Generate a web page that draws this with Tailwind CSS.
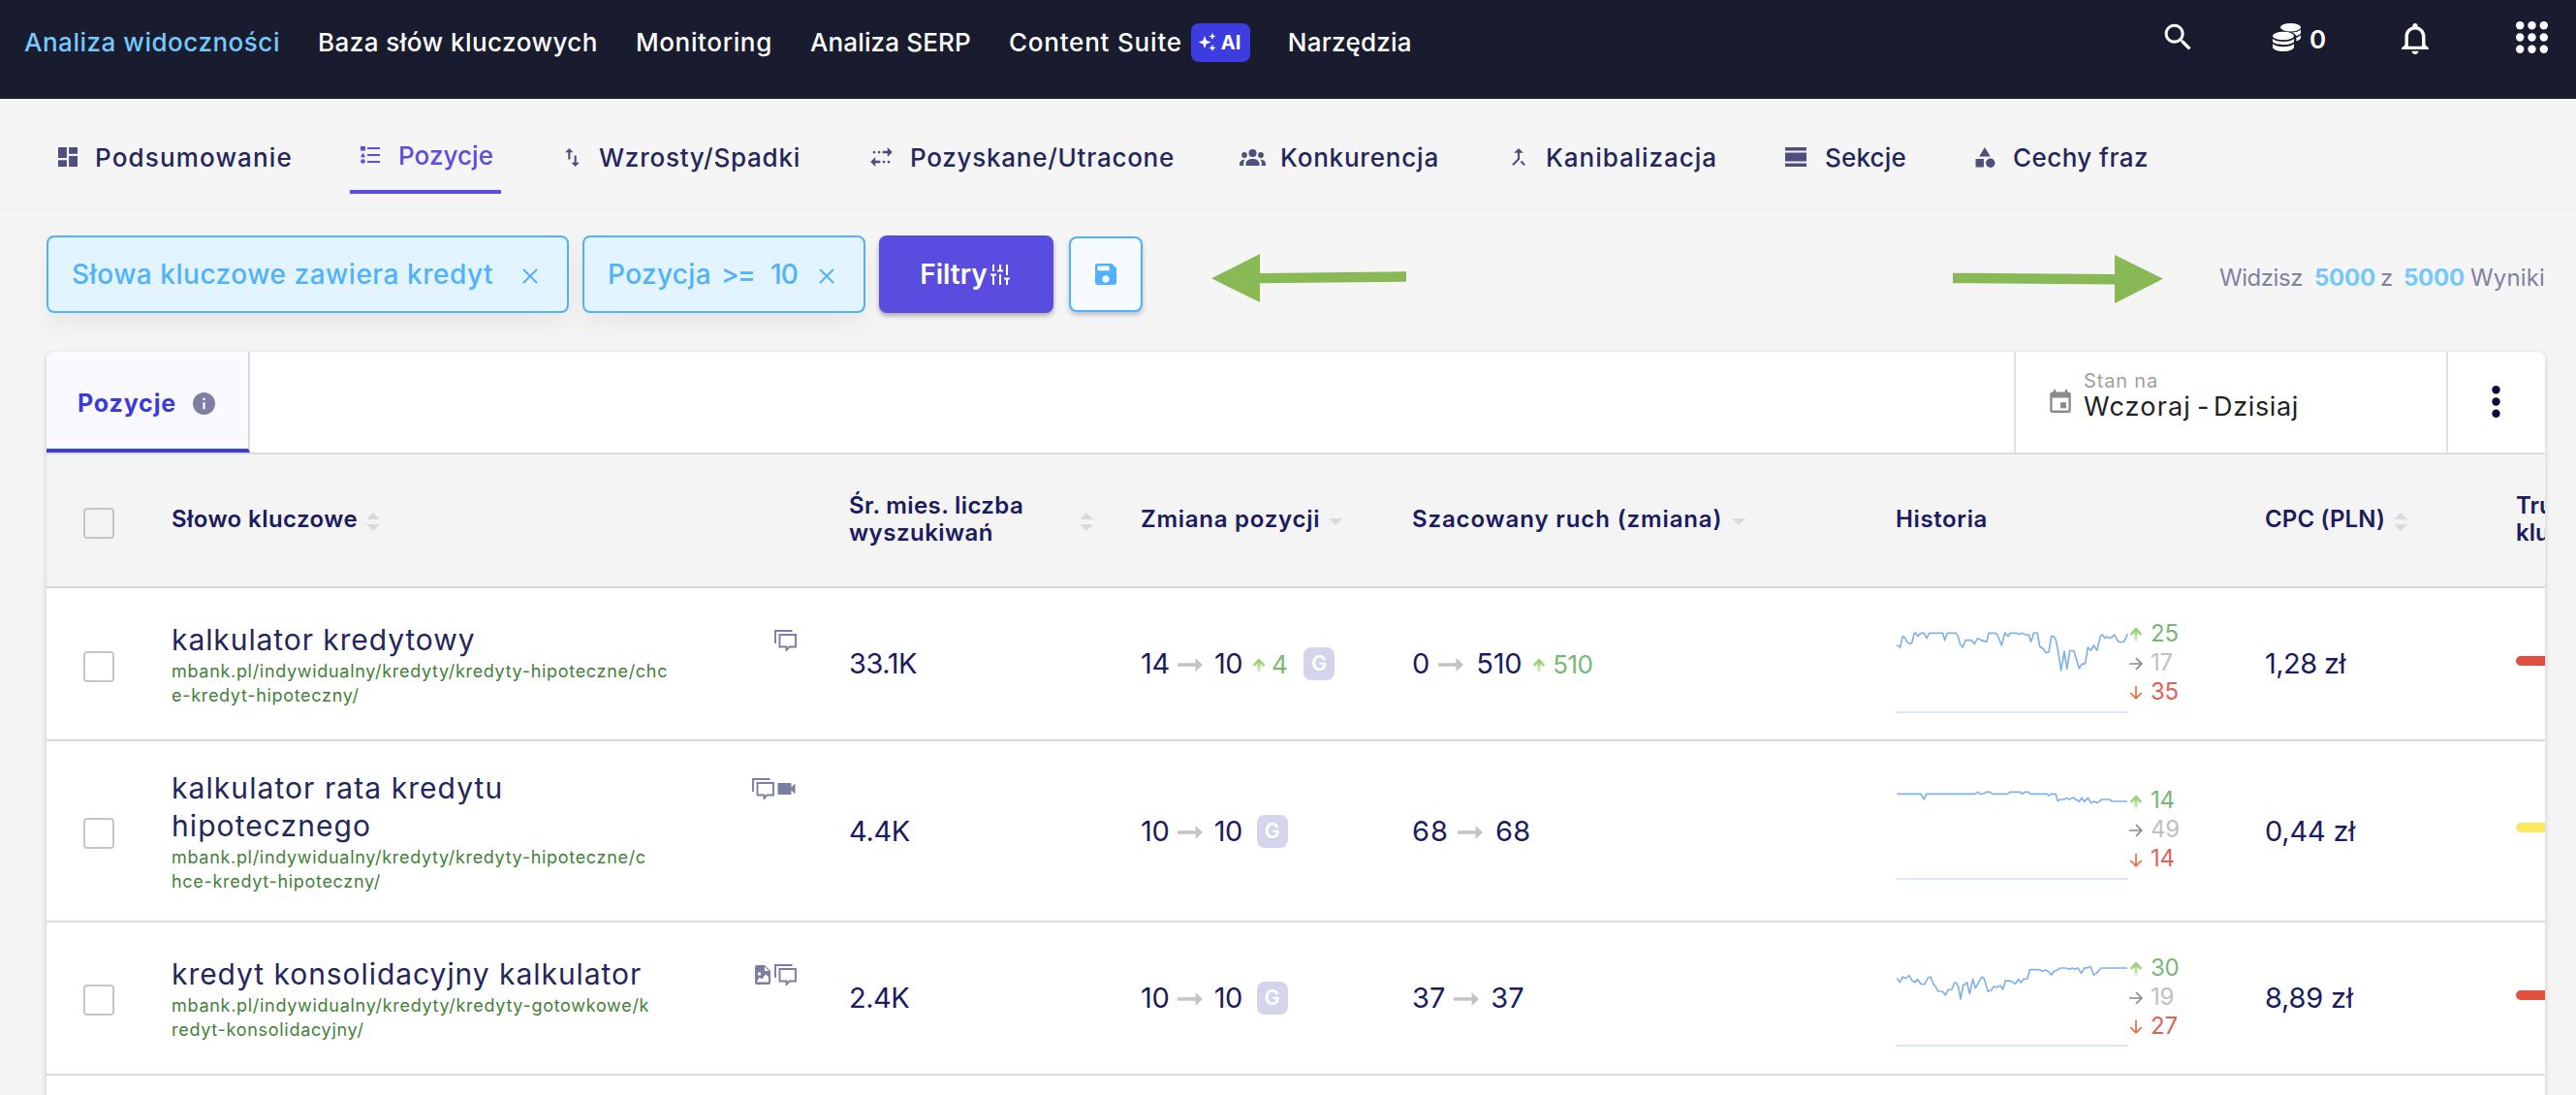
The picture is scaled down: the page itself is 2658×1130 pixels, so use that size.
<!DOCTYPE html>
<html lang="pl">
<head>
    <meta charset="UTF-8">
    <meta name="viewport" content="width=device-width, initial-scale=1.0">
    <title>Analiza widoczności - Pozycje</title>
    <script src="https://cdn.jsdelivr.net/npm/@tailwindcss/browser@4"></script>
</head>
<body class="h-[1130px] overflow-hidden bg-[#f5f5f5] font-[Inter,sans-serif] text-[#24265c] whitespace-nowrap">
    <!-- Icons -->
    <svg class="absolute size-0">
        <linearGradient id="fade" gradientUnits="userSpaceOnUse" x1="0" y1="2" x2="0" y2="15">
            <stop offset="0" stop-color="#8fd068"/>
            <stop offset="0.5" stop-color="#b0de95"/>
            <stop offset="1" stop-color="#e2f4d8"/>
        </linearGradient>
        <symbol id="i-sort" viewBox="0 0 14 19"><path d="M7 0l7 7H0zM0 12h14l-7 7z"/></symbol>
        <symbol id="i-desc" viewBox="0 0 14 7"><path d="M0 0h14L7 7z"/></symbol>
        <symbol id="i-long" viewBox="0 0 26 14"><path d="M0 5.2h18.500V0L26 7l-7.500 7V8.800H0z"/></symbol>
        <symbol id="i-up" viewBox="0 0 14 15"><path d="M7 2.500V15M1.500 8L7 2.500 12.500 8" fill="none" stroke="url(#fade)" stroke-width="3"/></symbol>
        <symbol id="i-same" viewBox="0 0 14 14"><path d="M0 7h12.500M7 1.200L12.800 7 7 12.800" fill="none" stroke="#8a8a8a" stroke-width="1.700"/></symbol>
        <symbol id="i-down" viewBox="0 0 14 14"><path d="M7 0v12.500M1.200 7L7 12.800 12.800 7" fill="none" stroke="#ee6a3c" stroke-width="1.700"/></symbol>
        <symbol id="i-close" viewBox="0 0 16 16"><path d="M1 1l14 14M15 1L1 15" fill="none" stroke="currentColor" stroke-width="2"/></symbol>
        <symbol id="i-chat" viewBox="0 0 23 22"><path d="M1 14V1h17.500M5.500 5H22v12.500h-6.500L12.500 21v-3.500h-7z" fill="none" stroke="currentColor" stroke-width="1.900"/></symbol>
        <symbol id="i-video" viewBox="3 6 18 12"><path d="M17 10.500V7c0-.55-.45-1-1-1H4c-.55 0-1 .45-1 1v10c0 .55.45 1 1 1h12c.55 0 1-.45 1-1v-3.500l4 4v-11l-4 4z"/></symbol>
        <symbol id="i-image" viewBox="0 0 16 20"><path fill-rule="evenodd" d="M2 0h8l6 6v12a2 2 0 0 1-2 2H2a2 2 0 0 1-2-2V2a2 2 0 0 1 2-2zM10 1.500V6h4.500zM2 17.500h12V12l-3-2.500-4 5-2.500-2zM4.500 7.200a1.800 1.800 0 1 0 0 3.600 1.800 1.800 0 0 0 0-3.600z"/></symbol>
    </svg>

    <!-- Top bar -->
    <header class="flex h-[102px] bg-[#191b2e] pl-[25px] pr-[29px] text-white">
        <nav class="flex h-[87px] items-center gap-[39px] text-[26px] font-medium">
            <a class="tracking-[0.52px] text-[#75c8fa]">Analiza widoczności</a>
            <a class="tracking-[0.46px]">Baza słów kluczowych</a>
            <a class="tracking-[0.64px]">Monitoring</a>
            <a class="tracking-[0.15px]">Analiza SERP</a>
            <a class="flex items-center tracking-[0.8px]">Content Suite
                <span class="ml-[9px] flex h-10 w-[61px] items-center gap-[5px] rounded-lg bg-[#3c3ce0] pl-[7px] text-[20px] font-bold tracking-normal">
                    <svg class="size-[19px]" viewBox="0 0 19 19" fill="currentColor"><path d="M7 3l1.800 4.700L13.500 9.500l-4.700 1.800L7 16l-1.800-4.700L.5 9.500l4.700-1.800zM15 0l1.100 2.400L18.500 3.500l-2.400 1.100L15 7l-1.100-2.400-2.400-1.100 2.400-1.100zM15 12l1.100 2.400 2.400 1.100-2.400 1.100L15 19l-1.100-2.400-2.400-1.100 2.400-1.100z"/></svg>AI
                </span>
            </a>
            <a class="tracking-[0.24px]">Narzędzia</a>
        </nav>
        <div class="ml-auto flex h-[77px] items-center">
            <svg class="size-[37px]" viewBox="0 0 24 24" fill="currentColor"><path d="M15.500 14h-.79l-.28-.27C15.410 12.590 16 11.110 16 9.500 16 5.910 13.090 3 9.500 3S3 5.910 3 9.500 5.910 16 9.500 16c1.610 0 3.090-.59 4.230-1.570l.27.28v.79l5 4.990L20.490 19l-4.990-5zm-6 0C7.010 14 5 11.990 5 9.500S7.010 5 9.500 5 14 7.010 14 9.500 11.990 14 9.500 14z"/></svg>
            <svg class="ml-[79px] h-[29px] w-[30px]" viewBox="0 0 30 29" fill="currentColor">
                <ellipse cx="18.500" cy="4.200" rx="10.500" ry="4.200"/>
                <path d="M29 6.500v3.200c0 1.500-2 2.700-4.800 3.300-.8-1.700-2.500-2.800-4.700-3.500 4.200 0 7.700-1.200 9.500-3zM29 12v3c0 1.600-2 2.800-4.600 3.400v-3.600c1.900-.6 3.600-1.500 4.600-2.800z"/>
                <ellipse cx="11" cy="13" rx="11" ry="4.300"/>
                <path d="M0 16c2 2 6 3 11 3s9-1 11-3v2.600c0 2-5 3.700-11 3.700S0 20.600 0 18.600zM0 21.300c2 2 6 2.900 11 2.900s9-.9 11-2.900v3.200C22 27 17 29 11 29S0 27 0 24.500z"/>
            </svg>
            <span class="ml-[8px] w-[18px] pt-[3px] text-[26px] font-semibold">0</span>
            <svg class="ml-[77px] mt-[2px] h-[32px] w-[28px]" viewBox="4 2.500 16 19.500" preserveAspectRatio="none" fill="currentColor"><path d="M12 22c1.100 0 2-.9 2-2h-4c0 1.100.9 2 2 2zm6-6v-5c0-3.070-1.630-5.640-4.500-6.320V4c0-.83-.67-1.500-1.500-1.500s-1.500.67-1.500 1.500v.68C7.640 5.360 6 7.920 6 11v5l-2 2v1h16v-1l-2-2zm-2 1H8v-6c0-2.480 1.510-4.500 4-4.500s4 2.020 4 4.500v6z"/></svg>
            <svg class="ml-[90px] size-[33px]" viewBox="0 0 33 33" fill="currentColor"><circle cx="4.200" cy="4.200" r="4.200"/><circle cx="16.500" cy="4.200" r="4.200"/><circle cx="28.800" cy="4.200" r="4.200"/><circle cx="4.200" cy="16.500" r="4.200"/><circle cx="16.500" cy="16.500" r="4.200"/><circle cx="28.800" cy="16.500" r="4.200"/><circle cx="4.200" cy="28.800" r="4.200"/><circle cx="16.500" cy="28.800" r="4.200"/><circle cx="28.800" cy="28.800" r="4.200"/></svg>
        </div>
    </header>

    <!-- Section tabs -->
    <nav class="flex h-[114px] items-start border-b border-[#f0f0f0] pl-[60px] pt-[22px] text-[26px] font-medium">
        <a class="flex h-[76px] w-[301px] items-center tracking-[1.16px]">
            <span class="w-[38px] text-[#4e4e7f]"><svg class="size-[20px]" viewBox="3 3 18 18" fill="currentColor"><path d="M3 13h8V3H3v10zm0 8h8v-6H3v6zm10 0h8V11h-8v10zm0-18v6h8V3h-8z"/></svg></span>Podsumowanie
        </a>
        <a class="mr-[66px] flex h-[76px] w-[156px] items-center border-b-4 border-[#5a4de0] pl-[11px] tracking-[0.05px] text-[#5a4de0]">
            <span class="w-[39px]"><svg class="h-[18px] w-[20px]" viewBox="0 0 20 18" fill="currentColor"><path d="M0 0h5v4.500H0zM7 1h13v2H7zM7 8h13v2H7zM7 15h13v2H7zM2.500 6.500L5 11.200H0z"/><circle cx="2.500" cy="15.500" r="2.300"/></svg></span>Pozycje
        </a>
        <a class="flex h-[76px] w-[315px] items-center tracking-[0.76px]">
            <span class="w-[35px] text-[#4e4e7f]"><svg class="h-[19px] w-[15px]" viewBox="5 3 14 18" fill="currentColor"><path d="M9 3L5 6.990h3V14h2V6.990h3L9 3zm7 14.010V10h-2v7.010h-3L15 21l4-3.990h-3z"/></svg></span>Wzrosty/Spadki
        </a>
        <a class="flex h-[76px] w-[381px] items-center tracking-[0.75px]">
            <span class="w-[41px] text-[#4e4e7f]"><svg class="h-[20px] w-[23px]" viewBox="3 4 18 16" fill="currentColor"><path d="M17 4l4 4-4 4V9h-4V7h4zM7 12l-4 4 4 4v-3h4v-2H7z"/><circle cx="10" cy="8" r="1.100"/><circle cx="6" cy="8" r="1.100"/><circle cx="14" cy="16" r="1.100"/><circle cx="18" cy="16" r="1.100"/></svg></span>Pozyskane/Utracone
        </a>
        <a class="flex h-[76px] w-[281px] items-center tracking-[0.8px]">
            <span class="w-[42px] text-[#4e4e7f]"><svg class="h-[17px] w-[27px]" viewBox="0 0 27 17" fill="currentColor"><circle cx="13.500" cy="4" r="4"/><circle cx="5" cy="6" r="2.900"/><circle cx="22" cy="6" r="2.900"/><path d="M6.500 17v-2c0-3 3-5 7-5s7 2 7 5v2zM0 17v-2c0-2.400 2-4.300 5.500-4.600C4.600 11.500 4.200 13 4.200 14.500V17zM27 17v-2c0-2.400-2-4.300-5.500-4.600.9 1.100 1.300 2.600 1.300 4.100V17z"/></svg></span>Konkurencja
        </a>
        <a class="flex h-[76px] w-[282px] items-center tracking-[0.95px]">
            <span class="w-[35px] text-[#4e4e7f]"><svg class="h-[18px] w-[14px]" viewBox="5.590 3.500 12.820 16.910" fill="currentColor"><path d="M17 20.410L18.410 19 15 15.590 13.590 17 17 20.410zM7.500 8H11v5.590L5.590 19 7 20.410l6-6V8h3.500L12 3.500 7.500 8z"/></svg></span>Kanibalizacja
        </a>
        <a class="flex h-[76px] w-[196px] items-center tracking-[0.19px]">
            <span class="w-[41px] text-[#4e4e7f]"><svg class="h-[20px] w-[22px]" viewBox="0 0 22 20" fill="currentColor"><path d="M0 0h22v3.500H0zM0 5.500h22v9H0zM0 16.500h22V20H0z"/></svg></span>Sekcje
        </a>
        <a class="flex h-[76px] items-center tracking-[0.44px]">
            <span class="w-[39px] text-[#4e4e7f]"><svg class="h-[21px] w-[21px]" viewBox="3 2 19 20" fill="currentColor"><path d="M12 2l-5.500 9h11zM3 13.500h8v8H3z"/><circle cx="17.500" cy="17.500" r="4.500"/></svg></span>Cechy fraz
        </a>
    </nav>

    <!-- Filters -->
    <section class="flex h-[147px] items-start pl-12 pr-8 pt-[27px] text-[28px] font-medium">
        <div class="flex h-20 w-[539px] items-center rounded-lg border-2 border-[#51b1fb] bg-[#e2f4ff] pl-[24px] text-[#51b1fb] shadow-[0_12px_24px_rgba(0,0,0,0.06)]">
            <span class="w-[465px] tracking-[0.52px]">Słowa kluczowe zawiera kredyt</span>
            <svg class="mt-[3px] size-[16px]"><use href="#i-close"/></svg>
        </div>
        <div class="ml-[14px] flex h-20 w-[292px] items-center rounded-lg border-2 border-[#51b1fb] bg-[#e2f4ff] pl-[24px] text-[#51b1fb] shadow-[0_12px_24px_rgba(0,0,0,0.06)]">
            <span class="w-[117px] tracking-[0.35px]">Pozycja</span>
            <span class="w-[51px] tracking-[-1.7px]">&gt;=</span>
            <span class="w-[50px] tracking-[-0.85px]">10</span>
            <svg class="mt-[3px] size-[16px]"><use href="#i-close"/></svg>
        </div>
        <button class="ml-[14px] flex h-20 w-[180px] items-center rounded-lg bg-[#594cdf] pl-[39px] font-semibold text-white shadow-[0_3px_5px_rgba(0,0,0,0.3)]">
            <span class="w-[76px]">Filtry</span>
            <svg class="h-[21px] w-[20px]" viewBox="0 0 20 21" fill="none" stroke="currentColor" stroke-width="2"><path d="M3 0v7M0 10.500h6M3 10.500V21M10 0v6M7 6.500h6M10 10v11M17 0v11M14 14.500h6M17 14.500V21"/></svg>
        </button>
        <button class="ml-[16px] mt-px flex h-[78px] w-[76px] items-center justify-center rounded-lg border-2 border-[#51b1fb] bg-[#f6fbff] text-[#51b1fb] shadow-[0_3px_5px_rgba(0,0,0,0.22)]">
            <svg class="size-[22px]" viewBox="3 3 18 18" fill="currentColor"><path d="M17 3H5c-1.110 0-2 .9-2 2v14c0 1.100.89 2 2 2h14c1.100 0 2-.9 2-2V7l-4-4zm-5 16c-1.660 0-3-1.340-3-3s1.340-3 3-3 3 1.340 3 3-1.340 3-3 3zm3-10H5V5h10v4z"/></svg>
        </button>
        <svg class="ml-[71px] mt-[19px] h-[50px] w-[201px]" viewBox="0 0 201 50" fill="#88b955"><path d="M0 25.300L50 0v20l151-1.800v10.600L50 30.200V50z"/></svg>
        <svg class="ml-[564px] mt-[20px] h-[50px] w-[217px]" viewBox="0 0 217 50" fill="#88b955"><path d="M217 24.700L167 0v20L0 18.700v10.500l167 1.200V50z"/></svg>
        <p class="ml-auto flex h-[88px] items-center text-[24px] font-normal text-[#8182a0]">
            <span class="w-[98px] tracking-[-0.45px]">Widzisz</span>
            <b class="w-[68px] tracking-[-0.22px] text-[#75c8fa]">5000</b>
            <span class="w-[24px]">z</span>
            <b class="w-[69px] tracking-[-0.22px] text-[#75c8fa]">5000</b>
            <span class="w-[77px] tracking-[0.15px]">Wyniki</span>
        </p>
    </section>

    <main class="ml-12 mr-8 h-[820px] overflow-hidden rounded-t-lg bg-white shadow-[0_2px_6px_rgba(0,0,0,0.18)]">
        <!-- Card bar -->
        <div class="flex h-[106px] border-b-2 border-[#dcdcdc]">
            <div class="flex h-[104px] w-[210px] items-center border-b-4 border-r-2 border-r-[#dcdcdc] border-b-[#3a3bdc] bg-[#f9f9ff] pl-[32px] pt-[7px] text-[25px] font-bold text-[#3a3bdc]">
                <span class="w-[119px] tracking-[0.84px]">Pozycje</span>
                <svg class="size-[23px] text-[#7e7fa3]" viewBox="2 2 20 20" fill="currentColor"><path d="M12 2C6.480 2 2 6.480 2 12s4.480 10 10 10 10-4.480 10-10S17.520 2 12 2zm1 15h-2v-6h2v6zm0-8h-2V7h2v2z"/></svg>
            </div>
            <div class="ml-auto flex w-[446px] items-start border-l-2 border-[#e0e0e0] pl-[35px] pt-[17px]">
                <svg class="mt-[22px] h-[24px] w-[22px] text-[#8b8b8b]" viewBox="3 1 18 20" fill="currentColor"><path d="M17 12h-5v5h5v-5zM16 1v2H8V1H6v2H5c-1.110 0-1.990.9-1.990 2L3 19c0 1.100.89 2 2 2h14c1.100 0 2-.9 2-2V5c0-1.100-.9-2-2-2h-1V1h-2zm3 18H5V8h14v11z"/></svg>
                <div class="ml-[13px]">
                    <div class="text-[20px] leading-[26px] tracking-[0.83px] text-[#a0a0a0]">Stan na</div>
                    <div class="flex pt-px text-[27px] leading-[26px] text-[#222]">
                        <span class="w-[117px] tracking-[1.17px]">Wczoraj</span><span class="w-[17px]">-</span><span class="tracking-[0.65px]">Dzisiaj</span>
                    </div>
                </div>
            </div>
            <div class="w-[102px] border-l-2 border-[#e0e0e0] pl-[45px] pt-[35px]">
                <svg class="h-[33px] w-[9px]" viewBox="0 0 9 33" fill="#0e0a38"><circle cx="4.500" cy="4.300" r="4.200"/><circle cx="4.500" cy="16.500" r="4.200"/><circle cx="4.500" cy="28.700" r="4.200"/></svg>
            </div>
        </div>

        <!-- Table head -->
        <div class="grid h-[138px] grid-cols-[129px_699px_301px_280px_499px_381px_259px_30px] items-center border-b-2 border-[#d6d6d6] bg-[#f4f4f4] pb-[3px] text-[24px] font-semibold leading-[28px] text-[#1b1b60]">
            <div class="pl-[38px] pt-[9px]"><div class="size-[32px] rounded border-2 border-[#c6c6c6]"></div></div>
            <div class="flex items-center"><span class="tracking-[0.42px]">Słowo kluczowe</span><svg class="ml-[9px] mt-[6px] h-[19px] w-[14px] fill-[#dadada]"><use href="#i-sort"/></svg></div>
            <div class="flex items-center"><span class="w-[238px]"><span class="tracking-[0.38px]">Śr. mies. liczba</span><br><span class="tracking-[0.48px]">wyszukiwań</span></span><svg class="mt-[6px] h-[19px] w-[14px] fill-[#dadada]"><use href="#i-sort"/></svg></div>
            <div class="flex items-center"><span class="tracking-[0.75px]">Zmiana pozycji</span><svg class="ml-[9px] mt-[6px] h-[7px] w-[14px] fill-[#dadada]"><use href="#i-desc"/></svg></div>
            <div class="flex items-center"><span class="tracking-[0.88px]">Szacowany ruch (zmiana)</span><svg class="ml-[10px] mt-[6px] h-[7px] w-[14px] fill-[#dadada]"><use href="#i-desc"/></svg></div>
            <div class="tracking-[0.62px]">Historia</div>
            <div class="flex items-center"><span class="tracking-[0.15px]">CPC (PLN)</span><svg class="ml-[9px] mt-[6px] h-[19px] w-[14px] fill-[#dadada]"><use href="#i-sort"/></svg></div>
            <div class="overflow-hidden">Tru<br>klu</div>
        </div>

        <!-- Row: kalkulator kredytowy -->
        <div class="grid h-[158px] grid-cols-[129px_699px_301px_280px_499px_381px_259px_30px] items-center border-b-2 border-[#dcdcdc] text-[29px] text-[#1b1b60]">
            <div class="pl-[38px] pt-[5px]"><div class="size-[32px] rounded border-2 border-[#c6c6c6]"></div></div>
            <div class="flex justify-between pr-[54px]">
                <div>
                    <div class="text-[30px] leading-[39px] tracking-[0.92px] text-[#24265c]">kalkulator kredytowy</div>
                    <div class="text-[18px] leading-[25px] tracking-[0.69px] text-[#44803a]">mbank.pl/indywidualny/kredyty/kredyty-hipoteczne/chc<br>e-kredyt-hipoteczny/</div>
                </div>
                <div class="flex h-[41px] items-center gap-[4px] text-[#7b7da3]"><svg class="h-[22px] w-[23px]"><use href="#i-chat"/></svg></div>
            </div>
            <div class="tracking-[-0.46px]">33.1K</div>
            <div class="flex items-center">
                <span class="tracking-[-0.27px]">14</span><svg class="ml-[8px] mt-[2px] h-[14px] w-[26px] fill-[#c4c4c4]"><use href="#i-long"/></svg><span class="ml-[12px] tracking-[-0.55px]">10</span>
                <svg class="ml-[10px] mt-[2px] h-[15px] w-[14px]"><use href="#i-up"/></svg><span class="ml-[6px] w-[17px] text-[26px] text-[#79b873]">4</span>
                <span class="ml-[16px] flex h-[34px] w-[32px] items-center justify-center rounded-lg bg-[#d4d5ec] text-[21px] font-semibold text-white">G</span>
            </div>
            <div class="flex items-center">
                <span>0</span><svg class="ml-[9px] mt-[2px] h-[14px] w-[26px] fill-[#c4c4c4]"><use href="#i-long"/></svg><span class="ml-[13px] tracking-[-0.24px]">510</span>
                <svg class="ml-[11px] mt-[2px] h-[15px] w-[14px]"><use href="#i-up"/></svg><span class="ml-[7px] text-[26px] tracking-[-0.6px] text-[#79b873]">510</span>
            </div>
            <div class="flex items-center">
                <svg class="mt-4 h-[86px] w-[240px]" viewBox="48 60 720 258" fill="none">
                    <path d="M48 315h720" stroke="#dbe7f4" stroke-width="6"/>
                    <polyline stroke="#80b1e8" stroke-width="5" stroke-linejoin="round" points="52,107 62,114 70,79 76,84 84,98 92,103 98,101 106,69 111,70 116,80 122,74 126,70 136,70 144,86 152,70 194,70 200,92 208,70 235,70 241,80 248,104 256,114 264,92 282,92 292,103 302,86 310,91 330,97 336,70 358,70 364,78 376,108 386,69 396,80 402,70 424,70 430,74 438,70 450,75 460,75 467,97 476,69 487,70 494,112 504,118 512,130 522,129 530,80 536,80 543,88 550,120 560,186 570,126 578,181 587,125 600,125 616,180 624,166 635,164 643,114 652,124 661,108 671,124 682,80 688,75 696,86 702,81 710,86 718,82 725,75 736,95 744,98 754,97 760,88 765,73"/>
                </svg>
                <div class="ml-px pb-[3px] text-[24px] leading-[30px] tracking-[-0.2px]">
                    <div class="flex items-center gap-[8px] text-[#79b873]"><svg class="mt-[2px] h-[15px] w-[14px]"><use href="#i-up"/></svg>25</div>
                    <div class="flex items-center gap-[8px] text-[#c0c0c0]"><svg class="mt-[2px] size-[14px]"><use href="#i-same"/></svg>17</div>
                    <div class="flex items-center gap-[8px] text-[#e0605a]"><svg class="mt-[3px] size-[14px]"><use href="#i-down"/></svg>35</div>
                </div>
            </div>
            <div class="tracking-[-0.57px]">1,28 zł</div>
            <div class="pb-[7px]"><div class="h-[10px] rounded-l-[5px] bg-[#e04f3f]"></div></div>
        </div>

        <!-- Row: kalkulator rata kredytu hipotecznego -->
        <div class="grid h-[187px] grid-cols-[129px_699px_301px_280px_499px_381px_259px_30px] items-center border-b-2 border-[#dcdcdc] text-[29px] text-[#1b1b60]">
            <div class="pl-[38px] pt-[4px]"><div class="size-[32px] rounded border-2 border-[#c6c6c6]"></div></div>
            <div class="flex justify-between pr-[55px]">
                <div>
                    <div class="text-[30px] leading-[39px] tracking-[1.07px] text-[#24265c]">kalkulator rata kredytu<br>hipotecznego</div>
                    <div class="text-[18px] leading-[25px] tracking-[0.69px] text-[#44803a]">mbank.pl/indywidualny/kredyty/kredyty-hipoteczne/c<br>hce-kredyt-hipoteczny/</div>
                </div>
                <div class="flex h-[41px] items-center gap-[3px] text-[#7b7da3]"><svg class="h-[22px] w-[23px]"><use href="#i-chat"/></svg><svg class="h-[12px] w-[19px] fill-current"><use href="#i-video"/></svg></div>
            </div>
            <div class="tracking-[-0.34px]">4.4K</div>
            <div class="flex items-center">
                <span class="tracking-[-0.2px]">10</span><svg class="ml-[8px] mt-[2px] h-[14px] w-[26px] fill-[#c4c4c4]"><use href="#i-long"/></svg><span class="ml-[12px] tracking-[-0.55px]">10</span>
                <span class="ml-[15px] flex h-[34px] w-[32px] items-center justify-center rounded-lg bg-[#d4d5ec] text-[21px] font-semibold text-white">G</span>
            </div>
            <div class="flex items-center">
                <span class="tracking-[1px]">68</span><svg class="ml-[9px] mt-[2px] h-[14px] w-[26px] fill-[#c4c4c4]"><use href="#i-long"/></svg><span class="ml-[13px] tracking-[0.4px]">68</span>
            </div>
            <div class="flex items-center">
                <svg class="mt-[7px] h-[96px] w-[240px]" viewBox="48 30 720 288" fill="none">
                    <path d="M48 312h720" stroke="#dbe7f4" stroke-width="6"/>
                    <polyline stroke="#80b1e8" stroke-width="5" stroke-linejoin="round" points="52,49 126,49 136,66 143,49 294,49 302,43 310,49 320,48 328,43 340,43 348,49 394,49 402,43 434,43 440,49 448,43 458,43 466,49 516,49 522,54 530,49 543,49 550,71 558,66 570,66 576,61 584,66 597,60 606,66 616,73 624,61 632,73 643,61 652,77 662,72 672,77 686,66 710,66 718,72 765,72"/>
                </svg>
                <div class="ml-px pb-[3px] text-[24px] leading-[30px] tracking-[-0.2px]">
                    <div class="flex items-center gap-[8px] text-[#79b873]"><svg class="mt-[2px] h-[15px] w-[14px]"><use href="#i-up"/></svg>14</div>
                    <div class="flex items-center gap-[8px] text-[#c0c0c0]"><svg class="mt-[2px] size-[14px]"><use href="#i-same"/></svg>49</div>
                    <div class="flex items-center gap-[8px] text-[#e0605a]"><svg class="mt-[3px] size-[14px]"><use href="#i-down"/></svg>14</div>
                </div>
            </div>
            <div class="tracking-[-0.2px]">0,44 zł</div>
            <div class="pb-[7px]"><div class="h-[10px] rounded-l-[5px] bg-[#fbea5e]"></div></div>
        </div>

        <!-- Row: kredyt konsolidacyjny kalkulator -->
        <div class="grid h-[158px] grid-cols-[129px_699px_301px_280px_499px_381px_259px_30px] items-center border-b-2 border-[#dcdcdc] text-[29px] text-[#1b1b60]">
            <div class="pl-[38px] pt-[4px]"><div class="size-[32px] rounded border-2 border-[#c6c6c6]"></div></div>
            <div class="flex justify-between pr-[54px]">
                <div>
                    <div class="text-[30px] leading-[39px] tracking-[0.95px] text-[#24265c]">kredyt konsolidacyjny kalkulator</div>
                    <div class="text-[18px] leading-[25px] tracking-[0.71px] text-[#44803a]">mbank.pl/indywidualny/kredyty/kredyty-gotowkowe/k<br>redyt-konsolidacyjny/</div>
                </div>
                <div class="flex h-[41px] items-center gap-[4px] text-[#7b7da3]"><svg class="h-[20px] w-[16px] fill-current"><use href="#i-image"/></svg><svg class="h-[22px] w-[23px]"><use href="#i-chat"/></svg></div>
            </div>
            <div class="tracking-[-0.5px]">2.4K</div>
            <div class="flex items-center">
                <span class="tracking-[-0.2px]">10</span><svg class="ml-[8px] mt-[2px] h-[14px] w-[26px] fill-[#c4c4c4]"><use href="#i-long"/></svg><span class="ml-[12px] tracking-[-0.55px]">10</span>
                <span class="ml-[15px] flex h-[34px] w-[32px] items-center justify-center rounded-lg bg-[#d4d5ec] text-[21px] font-semibold text-white">G</span>
            </div>
            <div class="flex items-center">
                <span>37</span><svg class="ml-[9px] mt-[2px] h-[14px] w-[26px] fill-[#c4c4c4]"><use href="#i-long"/></svg><span class="ml-[12px]">37</span>
            </div>
            <div class="flex items-center">
                <svg class="mt-4 h-[86px] w-[240px]" viewBox="48 60 720 258" fill="none">
                    <path d="M48 312h720" stroke="#dbe7f4" stroke-width="6"/>
                    <polyline stroke="#80b1e8" stroke-width="5" stroke-linejoin="round" points="52,104 61,116 70,99 79,104 90,95 98,110 108,116 116,107 126,121 138,122 148,102 156,99 164,120 172,130 180,144 194,145 202,156 210,140 222,138 230,117 238,120 242,130 249,168 257,126 269,117 277,152 287,106 295,134 304,118 314,100 320,101 326,118 334,145 344,140 352,129 360,132 366,128 374,128 380,138 388,111 405,112 418,121 428,107 436,117 444,106 456,105 463,77 492,77 502,82 512,78 522,84 530,94 538,82 550,77 558,72 576,72 586,76 594,72 604,76 612,71 623,88 632,72 642,71 651,67 661,94 672,86 684,72 765,72"/>
                </svg>
                <div class="ml-px pb-[3px] text-[24px] leading-[30px] tracking-[-0.2px]">
                    <div class="flex items-center gap-[8px] text-[#79b873]"><svg class="mt-[2px] h-[15px] w-[14px]"><use href="#i-up"/></svg>30</div>
                    <div class="flex items-center gap-[8px] text-[#c0c0c0]"><svg class="mt-[2px] size-[14px]"><use href="#i-same"/></svg>19</div>
                    <div class="flex items-center gap-[8px] text-[#e0605a]"><svg class="mt-[3px] size-[14px]"><use href="#i-down"/></svg>27</div>
                </div>
            </div>
            <div class="tracking-[-0.2px]">8,89 zł</div>
            <div class="pb-[7px]"><div class="h-[10px] rounded-l-[5px] bg-[#e04f3f]"></div></div>
        </div>
    </main>
</body>
</html>
